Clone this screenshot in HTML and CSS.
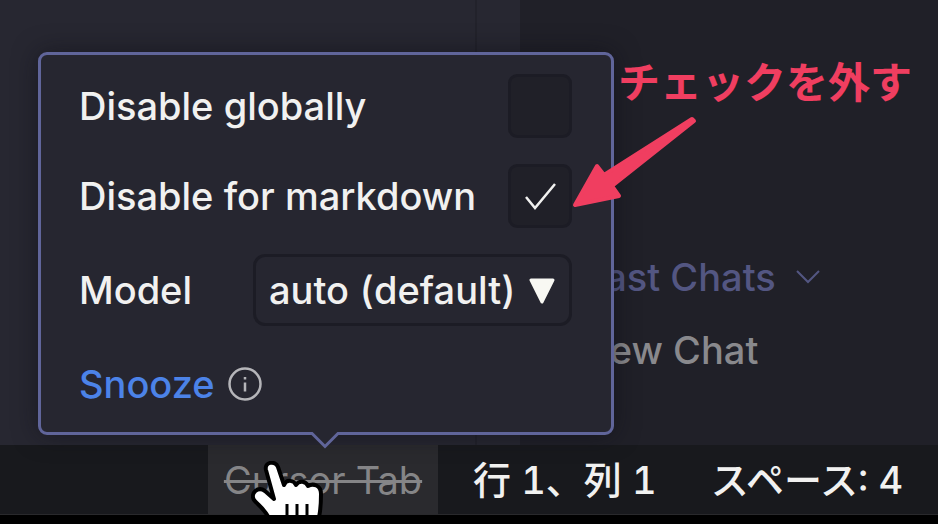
FILE: index.html
```html
<!DOCTYPE html>
<html lang="ja">
<head>
<meta charset="utf-8">
<title>Cursor Tab</title>
<link rel="stylesheet" href="styles.css">
</head>
<body>
<div class="app">
  <main class="workspace">
    <section class="editor"><div class="ruler"></div></section>
    <aside class="chat">
      <button class="past-chats" type="button">Past Chats
        <svg class="chevron" viewBox="0 0 24 14"><path d="M1 1l11 11L23 1"/></svg>
      </button>
      <a class="chat-link" href="#">New Chat</a>
    </aside>
  </main>

  <footer class="status-bar">
    <div class="tab-item">
      <button class="tab-toggle" type="button">Cursor Tab</button>
      <div class="popover">
        <div class="row">
          <label for="global">Disable globally</label>
          <input class="check" id="global" type="checkbox">
        </div>
        <div class="row">
          <label for="markdown">Disable for markdown</label>
          <span class="check-wrap">
            <input class="check" id="markdown" type="checkbox" checked>
            <svg class="tick" viewBox="0 0 64 64"><path d="M18 33l9 11L47 20"/></svg>
          </span>
        </div>
        <div class="row">
          <label for="model">Model</label>
          <span class="select-wrap">
            <select class="model" id="model"><option>auto (default)</option></select>
            <svg class="caret" viewBox="0 0 26 26"><path d="M2 2h22L13 24z"/></svg>
          </span>
        </div>
        <div class="row snooze-row">
          <a class="snooze" href="#">Snooze</a>
          <svg class="info" viewBox="0 0 34 34"><circle cx="17" cy="17" r="15.5"/><path d="M17 15.500v9"/><path d="M17 10v2.500"/></svg>
        </div>
        <svg class="pointer" viewBox="0 0 28 17"><path class="pointer-fill" d="M0 0h28v2h-1L14 15 1 2H0z"/><path class="pointer-line" d="M0 1.500h1l13 13 13-13h1"/></svg>
      </div>
      <svg class="hand" viewBox="0 0 74 54"><path d="M19 60C16 50 8 45 3 39c-4-7 4-14 11-9l9 8-8-29c-2-8 9-10 12-3l6 18c2-6 10-5 12 0 3-5 10-4 12 1 5-3 13-1 13 8 0 8 0 17-3 27z"/><path class="folds" d="M36 43v14M46 43v14M56 43v14"/></svg>
    </div>
    <span>行 1、列 1</span>
    <span>スペース: 4</span>
  </footer>
  <div class="letterbox"></div>

  <p class="note">チェックを外す</p>
  <svg class="arrow" viewBox="0 0 126 94"><path d="M120 3L32 59 25 50 3 89 47 80 40 70 122 5z"/></svg>
</div>
</body>
</html>
```
FILE: styles.css
```css
* { box-sizing: border-box; }

body {
  margin: 0;
  background: #000;
  color: #f1f1f0;
  font: 450 38px/48px Inter, "Noto Sans CJK JP", sans-serif;
}

button, select { font: inherit; color: inherit; }

.app {
  position: relative;
  display: flex;
  flex-direction: column;
  height: 100vh;
  overflow: hidden;
}

.workspace {
  flex: 1;
  display: grid;
  grid-template-columns: 520fr 418fr;
  background: #272731;
}

.editor { display: flex; justify-content: flex-end; }

.ruler { width: 45px; border-left: 2px solid #22222b; }

.chat {
  display: flex;
  flex-direction: column;
  align-items: flex-start;
  justify-content: flex-end;
  gap: 25px;
  padding: 0 61px 71px;
  background: #202028;
}

.past-chats {
  display: flex;
  align-items: center;
  gap: 20px;
  padding: 0;
  border: 0;
  background: none;
  color: #535682;
}

.chevron {
  width: 24px;
  height: 14px;
  fill: none;
  stroke: currentColor;
  stroke-width: 2;
}

.chat-link { color: #89898d; text-decoration: none; }

.status-bar {
  display: flex;
  align-items: center;
  gap: 54px;
  height: 70px;
  padding-left: 208px;
  border-bottom: 1px solid #29292c;
  background: #18191d;
  font-variant-numeric: tabular-nums;
  font-weight: 500;
  white-space: nowrap;
}

.status-bar > span:first-of-type { margin-left: -19px; }

.tab-item { position: relative; align-self: stretch; width: 230px; }

.tab-toggle {
  width: 100%;
  height: 100%;
  padding: 0;
  border: 0;
  background: #2a2a2e;
  color: #858587;
  font-weight: 400;
  text-decoration: line-through;
}

.letterbox { height: 9px; }

.popover {
  position: absolute;
  left: -170px;
  bottom: calc(100% + 10px);
  display: flex;
  flex-direction: column;
  gap: 26px;
  width: 576px;
  padding: 19px 39px 16px 38px;
  border: 3px solid #60659a;
  border-radius: 9px;
  background: #262630;
  box-shadow: 0 0 24px rgba(12, 12, 20, 0.5);
  font-weight: 450;
}

.row {
  display: flex;
  align-items: center;
  justify-content: space-between;
  min-height: 64px;
}

.check {
  display: block;
  width: 64px;
  height: 64px;
  margin: 0;
  appearance: none;
  border: 3px solid #1c1c25;
  border-radius: 9px;
  background: #202028;
}

.check-wrap, .select-wrap { position: relative; }

.tick {
  position: absolute;
  inset: 0;
  fill: none;
  stroke: #f1f1f0;
  stroke-width: 2.500;
  pointer-events: none;
}

.model {
  display: block;
  width: 319px;
  height: 72px;
  padding: 0 50px 0 13px;
  appearance: none;
  border: 3px solid #1c1c25;
  border-radius: 12px;
  background: #262630;
}

.caret {
  position: absolute;
  top: 24px;
  right: 17px;
  width: 26px;
  height: 26px;
  fill: #f8f8f3;
  stroke: #f8f8f3;
  stroke-width: 3;
  stroke-linejoin: round;
  pointer-events: none;
}

.snooze-row { justify-content: flex-start; gap: 13px; }

.snooze { color: #4c83e8; text-decoration: none; }

.info {
  width: 34px;
  height: 34px;
  fill: none;
  stroke: #b5b5b9;
  stroke-width: 2.500;
}

.pointer {
  position: absolute;
  left: 270px;
  top: 100%;
  width: 28px;
  height: 17px;
}

.pointer-fill { fill: #262630; }

.pointer-line { fill: none; stroke: #60659a; stroke-width: 3; }

.hand {
  position: absolute;
  left: 43px;
  bottom: -1px;
  width: 74px;
  height: 54px;
  fill: #fff;
  stroke: #000;
  stroke-width: 4;
  stroke-linejoin: round;
}

.folds { stroke-width: 3; }

.note {
  position: absolute;
  top: 56px;
  left: 618px;
  margin: 0;
  color: #f03e60;
  font: 700 42px/48px "Noto Sans CJK JP", sans-serif;
}

.arrow {
  position: absolute;
  top: 116px;
  left: 572px;
  width: 126px;
  height: 94px;
  fill: #f03e60;
  stroke: #f03e60;
  stroke-width: 4;
  stroke-linejoin: round;
}
```
